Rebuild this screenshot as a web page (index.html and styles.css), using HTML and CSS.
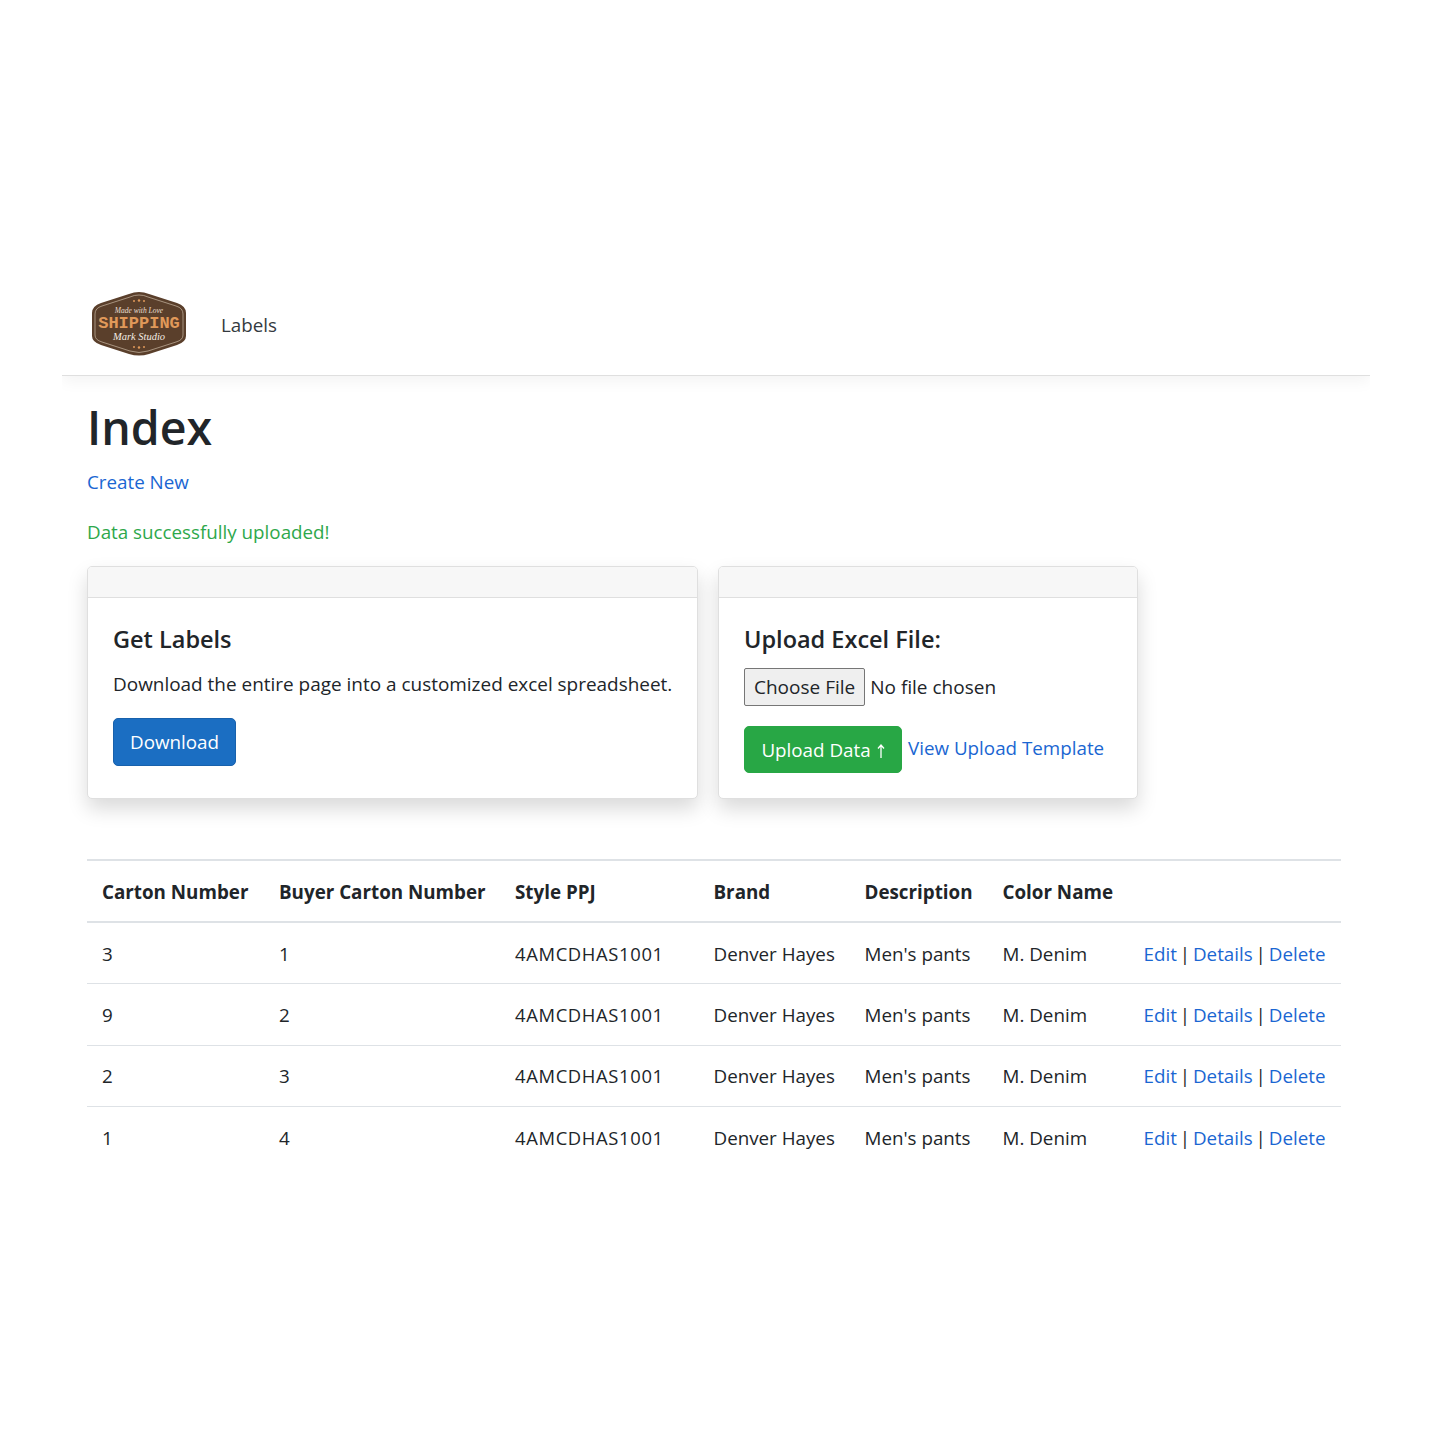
FILE: index.html
```html
<!DOCTYPE html>
<html lang="en">
<head>
    <meta charset="UTF-8">
    <meta name="viewport" content="width=device-width, initial-scale=1.0">
    <title>Index</title>
    <link rel="stylesheet" href="styles.css">
</head>
<body>

<div class="page">
    <nav class="navbar">
        <a class="brand" href="#">
            <svg class="logo" width="96" height="66" viewBox="0 0 96 66">
                <path d="M48 1 Q53 1 58 3 L86 12 Q95 15 95 22 L95 45 Q95 51 86 54 L58 63 Q48 66 38 63 L10 54 Q1 51 1 45 L1 22 Q1 15 10 12 L38 3 Q43 1 48 1 Z" fill="#5a3f2b"/>
                <path d="M48 4 Q53 4 57 6 L85 15 Q92 17 92 23 L92 44 Q92 49 85 51 L57 60 Q48 63 39 60 L11 51 Q4 49 4 44 L4 23 Q4 17 11 15 L39 6 Q43 4 48 4 Z" fill="none" stroke="#c9b8a4" stroke-width="0.7"/>
                <text class="logo-small" x="48" y="21.5" text-anchor="middle">Made with Love</text>
                <text class="logo-big" x="48" y="37" text-anchor="middle">SHIPPING</text>
                <text class="logo-script" x="48" y="48.5" text-anchor="middle">Mark Studio</text>
                <circle cx="43" cy="10" r="1" fill="#e0995a"/>
                <circle cx="48" cy="9.5" r="1.2" fill="#e0995a"/>
                <circle cx="53" cy="10" r="1" fill="#e0995a"/>
                <circle cx="43" cy="56" r="1" fill="#e0995a"/>
                <circle cx="48" cy="56.5" r="1.2" fill="#e0995a"/>
                <circle cx="53" cy="56" r="1" fill="#e0995a"/>
            </svg>
        </a>
        <a class="nav-link" href="#">Labels</a>
    </nav>

    <main class="content">
        <h1>Index</h1>
        <p class="create"><a href="#">Create New</a></p>
        <p class="success">Data successfully uploaded!</p>

        <div class="cards">
            <div class="card card-labels">
                <div class="card-header"></div>
                <div class="card-body">
                    <h5>Get Labels</h5>
                    <p class="card-text">Download the entire page into a customized excel spreadsheet.</p>
                    <a class="btn btn-primary" href="#">Download</a>
                </div>
            </div>
            <div class="card card-upload">
                <div class="card-header"></div>
                <div class="card-body">
                    <h5>Upload Excel File:</h5>
                    <input class="file-input" type="file">
                    <div class="upload-row">
                        <button class="btn btn-success" type="button">Upload Data<svg class="arrow" width="8" height="14" viewBox="0 0 8 14"><path d="M4 14V1M1 4.5L4 1L7 4.5" fill="none" stroke="#fff" stroke-width="1.3"/></svg></button>
                        <a class="template-link" href="#">View Upload Template</a>
                    </div>
                </div>
            </div>
        </div>

        <table class="table">
            <colgroup>
                <col class="col-carton">
                <col class="col-buyer">
                <col class="col-style">
                <col class="col-brand">
                <col class="col-desc">
                <col class="col-color">
                <col class="col-actions">
            </colgroup>
            <thead>
                <tr>
                    <th>Carton Number</th>
                    <th>Buyer Carton Number</th>
                    <th>Style PPJ</th>
                    <th>Brand</th>
                    <th>Description</th>
                    <th>Color Name</th>
                    <th></th>
                </tr>
            </thead>
            <tbody>
                <tr>
                    <td>3</td><td>1</td><td class="style-code">4AMCDHAS1001</td><td>Denver Hayes</td><td>Men's pants</td><td>M. Denim</td>
                    <td class="actions"><a href="#">Edit</a> | <a href="#">Details</a> | <a href="#">Delete</a></td>
                </tr>
                <tr>
                    <td>9</td><td>2</td><td class="style-code">4AMCDHAS1001</td><td>Denver Hayes</td><td>Men's pants</td><td>M. Denim</td>
                    <td class="actions"><a href="#">Edit</a> | <a href="#">Details</a> | <a href="#">Delete</a></td>
                </tr>
                <tr>
                    <td>2</td><td>3</td><td class="style-code">4AMCDHAS1001</td><td>Denver Hayes</td><td>Men's pants</td><td>M. Denim</td>
                    <td class="actions"><a href="#">Edit</a> | <a href="#">Details</a> | <a href="#">Delete</a></td>
                </tr>
                <tr>
                    <td>1</td><td>4</td><td class="style-code">4AMCDHAS1001</td><td>Denver Hayes</td><td>Men's pants</td><td>M. Denim</td>
                    <td class="actions"><a href="#">Edit</a> | <a href="#">Details</a> | <a href="#">Delete</a></td>
                </tr>
            </tbody>
        </table>
    </main>
</div>

</body>
</html>
```

FILE: styles.css
```css
body {
    font-family: "Open Sans", "Noto Sans", sans-serif;
    font-size: 18.8px;
    line-height: 30px;
    color: #212529;
    margin: 0;
    background-color: #fff;
}

a {
    color: #1a66d2;
    text-decoration: none;
}

.page {
    margin: 0 62px;
    padding-top: 285px;
    height: 1147px;
}

.navbar {
    display: flex;
    align-items: center;
    height: 80px;
    padding: 0 0 10px 29px;
    border-bottom: 1px solid #dfdfdf;
    box-shadow: 0 5px 15px rgba(0, 0, 0, 0.05);
    clip-path: inset(0 0 -30px 0);
}

.brand {
    display: flex;
    margin: 0 34px 2px 0;
}

.logo-small {
    font-family: "Liberation Serif", serif;
    font-style: italic;
    font-size: 7.5px;
    fill: #eadfd2;
}

.logo-big {
    font-family: "Liberation Mono", monospace;
    font-weight: bold;
    font-size: 17px;
    fill: #e0995a;
}

.logo-script {
    font-family: "Liberation Serif", serif;
    font-style: italic;
    font-size: 10.5px;
    fill: #f3ece3;
}

.nav-link {
    color: #343a40;
}

.content {
    padding: 0 29px 0 25px;
}

h1 {
    font-size: 46.5px;
    font-weight: 600;
    line-height: 58px;
    margin: 22px 0 11px;
}

.create {
    margin: 0 0 20px;
}

.success {
    color: #2ea84b;
    margin: 0 0 19px;
}

.cards {
    display: flex;
    gap: 20px;
    margin-bottom: 60px;
}

.card {
    background-color: #fff;
    border: 1px solid #dfdfdf;
    border-radius: 5px;
    box-shadow: 0 10px 20px rgba(0, 0, 0, 0.15);
    height: 233px;
    box-sizing: border-box;
    overflow: hidden;
}

.card-labels {
    width: 611px;
}

.card-upload {
    width: 420px;
}

.card-header {
    height: 30px;
    background-color: #f7f7f7;
    border-bottom: 1px solid #dfdfdf;
}

.card-body {
    padding: 26px 25px 0;
}

h5 {
    font-size: 23.5px;
    font-weight: 600;
    line-height: 30px;
    margin: 0 0 15px;
}

.card-text {
    font-size: 18.95px;
    white-space: nowrap;
    margin: 0 0 19px;
}

.btn {
    display: inline-block;
    box-sizing: border-box;
    font-family: inherit;
    font-size: 18.8px;
    line-height: 28px;
    padding: 9px 16px;
    border-radius: 5px;
    border: 1px solid transparent;
    color: #fff;
}

.btn-primary {
    background-color: #1b6ec2;
    border-color: #1861ac;
    height: 48px;
}

.btn-success {
    background-color: #28a745;
    border-color: #28a745;
    height: 47px;
    width: 158px;
    white-space: nowrap;
}

.arrow {
    margin-left: 6px;
    vertical-align: -1px;
}

.file-input {
    display: block;
    font-family: inherit;
    font-size: 19px;
    color: #212529;
    height: 38px;
    margin-top: -1px;
}

.file-input::file-selector-button {
    font-family: inherit;
    font-size: 19px;
    height: 38px;
    padding: 0 9px;
    margin-right: 5px;
    background-color: #efefef;
    border: 1px solid #767676;
    border-radius: 2px;
    color: #212529;
}

.upload-row {
    display: flex;
    align-items: flex-start;
    gap: 6px;
    margin-top: 20px;
}

.template-link {
    margin-top: 7px;
}

.table {
    border-collapse: collapse;
    table-layout: fixed;
    width: 1254px;
}

.col-carton { width: 177px; }
.col-buyer { width: 236px; }
.col-style { width: 198.5px; }
.col-brand { width: 151px; }
.col-desc { width: 138px; }
.col-color { width: 141px; }
.col-actions { width: 212.5px; }

.table th,
.table td {
    padding: 15.6px 15px 14.4px;
    line-height: 30.4px;
    text-align: left;
    white-space: nowrap;
    border-top: 1px solid #dee2e6;
}

.table th {
    font-weight: 700;
    border-top: 2px solid #dee2e6;
    border-bottom: 2px solid #dee2e6;
}

.table tbody tr:first-child td {
    border-top: 0;
    padding-bottom: 14px;
}

.table .style-code {
    font-size: 18.4px;
    letter-spacing: 0.65px;
}

.table .actions {
    word-spacing: -2px;
}
```
